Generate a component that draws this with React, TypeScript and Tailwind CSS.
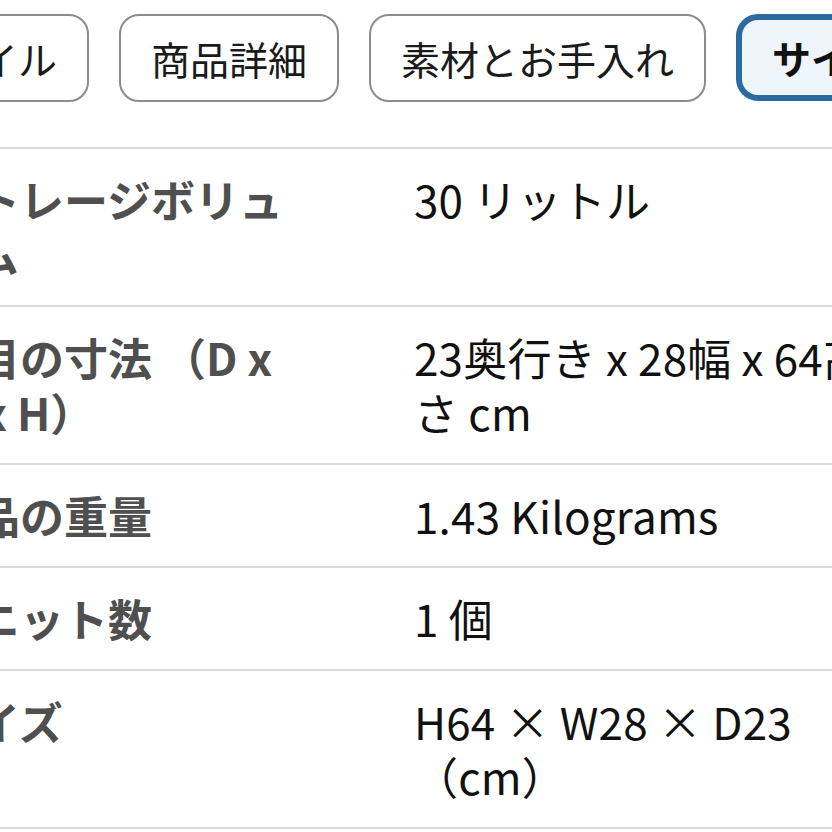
import React from "react";

const font = { fontFamily: '"Noto Sans CJK JP", "Noto Sans", sans-serif' };

const tabs = [
  { label: "スタイル", active: false },
  { label: "商品詳細", active: false },
  { label: "素材とお手入れ", active: false },
  { label: "サイズ", active: true },
];

const rows = [
  { label: "ストレージボリューム", value: "30 リットル" },
  { label: "品目の寸法 （D x W x H）", value: "23奥行き x 28幅 x 64高さ cm" },
  { label: "商品の重量", value: "1.43 Kilograms" },
  { label: "ユニット数", value: "1 個" },
  { label: "サイズ", value: "H64 × W28 × D23（cm）" },
];

export default function App() {
  return (
    <div className="w-[832px] h-[832px] overflow-hidden bg-white relative" style={font}>
      <div className="pt-[14px]">
        <div className="flex gap-[30px] ml-[-131px] w-max">
          {tabs.map((t) =>
            t.active ? (
              <div
                key={t.label}
                className="h-[87px] flex items-center px-[30px] border-[6px] border-[#2d6a9f] rounded-[22px] bg-[#eef6fb] text-[39px] font-bold text-[#111111] whitespace-nowrap"
              >
                {t.label}
              </div>
            ) : (
              <div
                key={t.label}
                className="h-[88px] flex items-center px-[30px] border-2 border-[#8c8c8c] rounded-[20px] bg-white text-[39px] text-[#1a1a1a] whitespace-nowrap"
              >
                {t.label}
              </div>
            )
          )}
        </div>
      </div>
      <div className="mt-[45px] ml-[-100px] w-[1032px] border-t-2 border-[#d9dbdb]">
        {rows.map((r) => (
          <div
            key={r.label}
            className="grid grid-cols-[352px_466px] gap-x-[130px] pl-[32px] py-[23px] border-b-2 border-[#d9dbdb] text-[44px] leading-[55px]"
          >
            <div className="font-bold text-[#4f4f4f]">{r.label}</div>
            <div className="text-[#111111] tracking-[0.2px]">{r.value}</div>
          </div>
        ))}
      </div>
    </div>
  );
}
